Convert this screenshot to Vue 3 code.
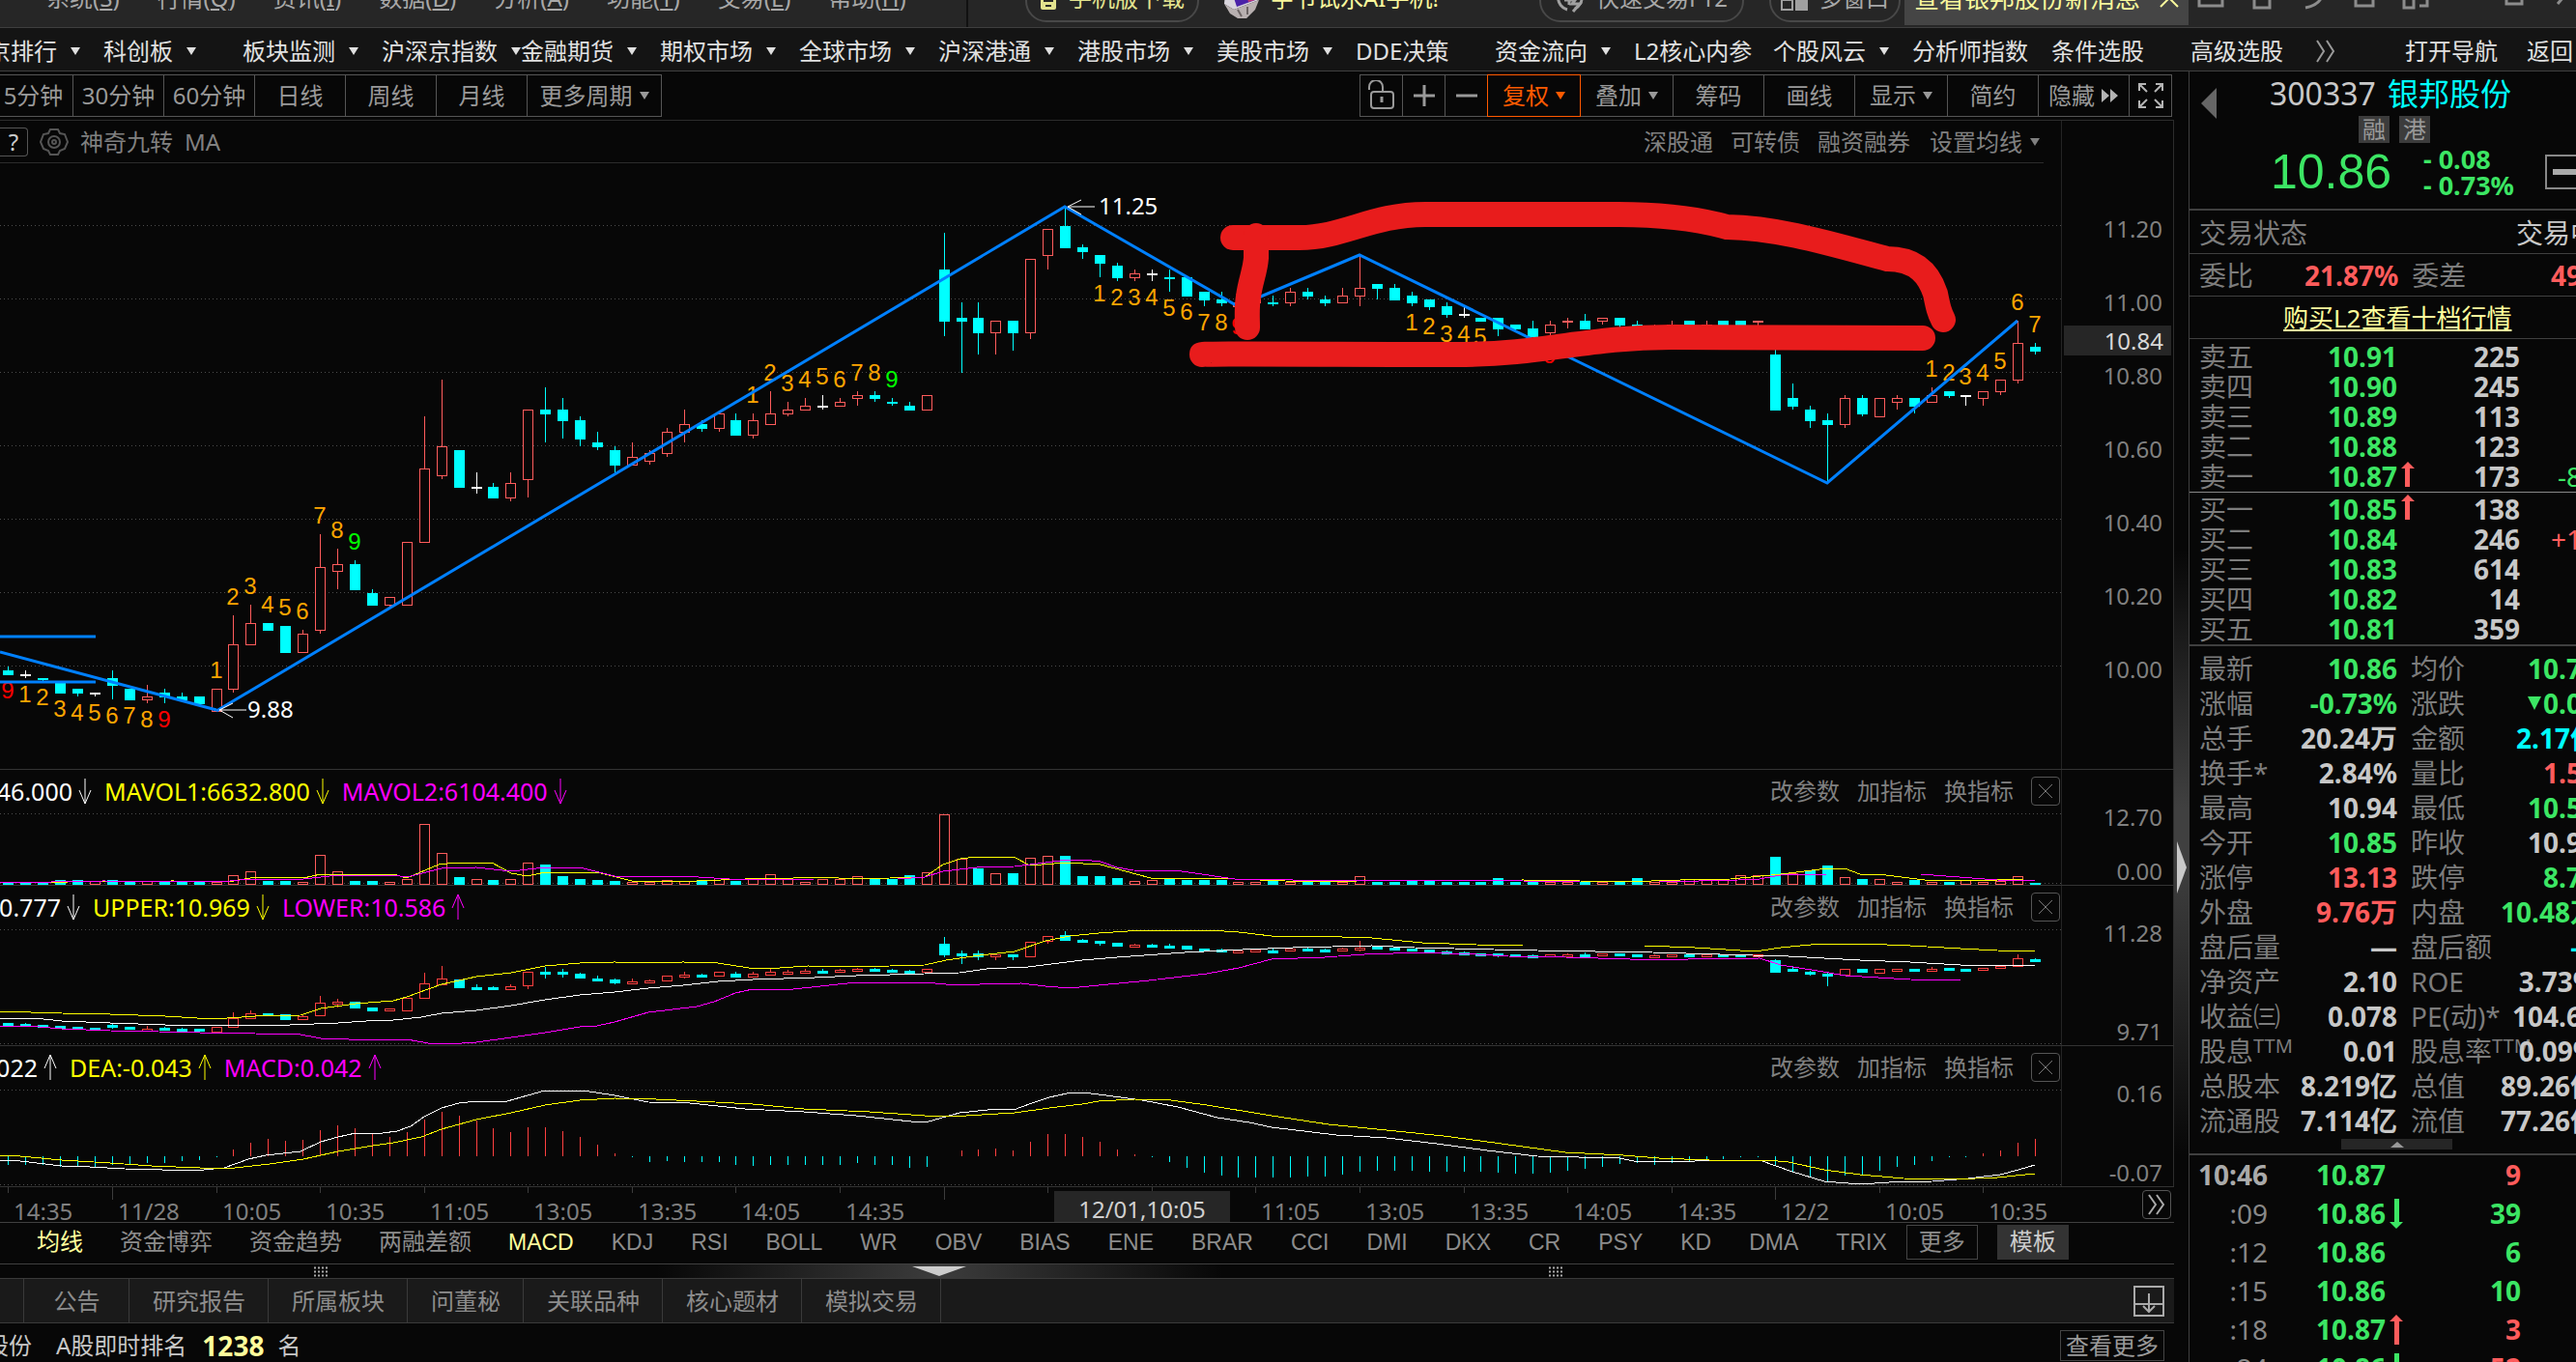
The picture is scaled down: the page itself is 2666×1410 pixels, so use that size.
<script setup>
const menus = [
  ['系统', 'S'], ['行情', 'Q'], ['资讯', 'I'], ['数据', 'D'],
  ['分析', 'A'], ['功能', 'T'], ['交易', 'E'], ['帮助', 'H'],
]
const winIcons = [
  'M2 0V22H26V0M8 8H20',
  'M6 0V24H22V0M1 6H27',
  'M4 0H16C28 4 26 20 6 24',
  'M5 0V22H23V0',
  'M2 10H12V24H2ZM2 0V4H26V22H18',
  'M2 14H26',
  'M2 4H18V20H2ZM8 0H24V16',
  'M2 -8L26 20M26 -8L2 20',
]
const navs = [
  ['深京排行', 1], ['科创板', 1], ['板块监测', 1], ['沪深京指数', 1], ['金融期货', 1], ['期权市场', 1],
  ['全球市场', 1], ['沪深港通', 1], ['港股市场', 1], ['美股市场', 1], ['DDE决策', 0], ['资金流向', 1],
  ['L2核心内参', 0], ['个股风云', 1], ['分析师指数', 0], ['条件选股', 0], ['高级选股', 0],
]
const periods = ['5分钟', '30分钟', '60分钟', '日线', '周线', '月线']
const priceTicks = ['11.20', '11.00', '10.80', '10.60', '10.40', '10.20', '10.00']

// high, body top, body bottom, low (in cents) and kind: c falling, r rising, w flat
const candles = `1000 999 998 998 c|999 998 998 997 w|997 997 997 996 c|996 996 993 993 c|994 994 993 992 c|993 993 993 992 w
999 997 995 991 c|994 994 991 991 c|995 992 991 990 r|994 993 992 990 c|993 992 991 991 c|992 992 990 990 c
994 994 988 988 r|1014 1006 994 993 r|1017 1012 1006 1006 r|1012 1012 1010 1010 c|1011 1011 1004 1004 c|1010 1009 1004 1004 r
1036 1027 1010 1009 r|1032 1028 1026 1021 r|1029 1028 1021 1021 c|1021 1020 1017 1017 c|1019 1019 1017 1016 r|1034 1034 1017 1017 r
1068 1054 1034 1034 r|1078 1060 1052 1051 r|1059 1059 1049 1049 c|1053 1049 1049 1047 w|1050 1049 1046 1046 c|1053 1050 1046 1045 r
1070 1070 1051 1046 r|1076 1070 1069 1061 c|1073 1070 1067 1062 c|1068 1067 1062 1060 c|1064 1061 1060 1059 c|1060 1059 1055 1053 c
1061 1057 1055 1055 r|1059 1058 1056 1055 r|1065 1064 1058 1057 r|1070 1066 1064 1061 r|1067 1066 1065 1064 c|1069 1069 1065 1064 r
1069 1067 1063 1063 c|1069 1067 1063 1062 r|1075 1069 1066 1066 r|1072 1070 1069 1068 r|1073 1071 1070 1070 r|1074 1071 1071 1070 w
1073 1072 1071 1071 r|1075 1074 1073 1071 r|1075 1074 1073 1072 c|1073 1072 1072 1071 c|1072 1071 1070 1070 c|1074 1074 1070 1070 r
1118 1108 1094 1090 c|1099 1095 1094 1080 c|1099 1095 1091 1085 c|1094 1094 1091 1085 r|1094 1094 1091 1086 c|1111 1111 1091 1089 r
1119 1119 1112 1108 r|1125 1120 1114 1114 c|1115 1114 1113 1111 c|1112 1112 1110 1106 c|1110 1109 1106 1105 c|1108 1107 1106 1105 r
1108 1107 1107 1105 w|1108 1106 1106 1102 c|1106 1106 1101 1101 c|1102 1102 1100 1098 c|1102 1100 1099 1098 c|1099 1099 1098 1097 r
1100 1100 1099 1098 r|1101 1099 1099 1098 c|1103 1102 1099 1098 r|1103 1102 1101 1100 c|1101 1100 1099 1098 c|1103 1101 1099 1099 r
1112 1103 1101 1098 r|1104 1104 1103 1100 c|1104 1103 1100 1100 c|1102 1101 1099 1098 c|1100 1100 1098 1097 c|1099 1098 1096 1095 c
1098 1096 1096 1095 w|1095 1095 1094 1094 c|1095 1095 1092 1090 c|1093 1093 1092 1091 c|1094 1092 1090 1090 c|1094 1093 1091 1089 r
1095 1094 1094 1092 r|1096 1094 1092 1092 c|1095 1095 1094 1093 r|1095 1095 1093 1092 c|1094 1093 1092 1091 c|1093 1092 1091 1091 r
1094 1093 1092 1092 r|1094 1094 1093 1093 c|1094 1093 1092 1092 r|1094 1094 1093 1093 c|1094 1094 1093 1092 c|1094 1094 1094 1092 r
1087 1085 1070 1070 c|1077 1073 1071 1070 c|1071 1070 1067 1065 c|1069 1067 1066 1050 c|1074 1073 1066 1065 r|1074 1073 1069 1068 c
1073 1073 1068 1068 r|1074 1073 1072 1070 r|1073 1073 1071 1069 c|1076 1074 1072 1072 r|1075 1075 1074 1073 c|1074 1074 1074 1071 w
1075 1075 1073 1071 r|1078 1078 1075 1074 r|1094 1088 1078 1077 r|1088 1087 1086 1085 c`
  .split(/[|\n]/)
  .map((s) => {
    const [h, t, b, l, k] = s.trim().split(' ')
    return { h: +h, t: +t, b: +b, l: +l, k }
  })

const STEP = 17.93
const xAt = (i) => Math.round(8.4 + STEP * i)
const mainY = (p) => Math.round(64.5 + (1120 - p) * 3.806)
const bollY = (p) => Math.round((1128 - p) * 0.754)

function shape(list, y, minBody) {
  return list.map((c, i) => {
    const top = y(c.t)
    const h = Math.max(y(c.b) - top, minBody)
    const hi = y(c.h)
    return { x: xAt(i), top, h, hi, lo: Math.max(y(c.l), top + h), k: c.k }
  })
}
const mainBars = shape(candles, mainY, 1)
const bollBars = shape(candles, bollY, 2).map((b) => ({ ...b, k: b.k === 'w' ? 'c' : b.k }))

// nine-turn counters: first bar, side, digits
const runs = [
  [0, 'b', '9'], [1, 'b', '123456789'], [12, 'a', '123456789'], [43, 'a', '123456789'],
  [63, 'b', '123456789'], [81, 'b', '123456789'], [111, 'a', '1234567'],
]
const counters = runs.flatMap(([start, side, digits]) =>
  [...digits].map((d, n) => {
    const c = candles[start + n]
    const below = side === 'b'
    return {
      d,
      x: xAt(start + n),
      y: below ? mainY(c.l) + 25 : mainY(c.h) - 11,
      cls: d === '9' ? (below ? 'nine-red' : 'nine-green') : 'count',
    }
  }),
)
const zigzag = [[12, 988], [61, 1125], [71, 1098], [78, 1112], [105, 1050], [116, 1094]]
  .map(([i, p]) => `${xAt(i)},${mainY(p)}`).join(' ')

const volumes = [
  1, 1, 1, 4, 4, 3, 4, 2, 3, 2, 2, 2, 2, 9, 13, 3, 3, 2, 30, 13, 3, 3, 2, 5, 62, 32, 7, 5, 4, 5, 22, 20, 8, 5, 4, 3, 2, 2, 4, 3,
  3, 6, 3, 6, 10, 5, 2, 5, 5, 8, 5, 5, 9, 12, 72, 26, 16, 11, 11, 27, 29, 29, 8, 8, 6, 3, 4, 5, 4, 4, 4, 2, 2, 3, 2, 2, 2, 2, 8, 2,
  2, 3, 3, 2, 2, 2, 6, 2, 3, 2, 2, 2, 2, 2, 6, 2, 2, 5, 4, 5, 9, 9, 28, 11, 14, 19, 7, 5, 5, 2, 4, 2, 2, 4, 2, 3, 8, 1,
]
const risingVolume = new Set([5, 27, 47, 54, 55, 65, 66, 97, 99, 100, 103, 113])
const volBars = volumes.map((v, i) => ({
  x: xAt(i), v, up: risingVolume.has(i) || candles[i].k === 'r',
}))
const macd = [
  -9, -9, -9, -11, -11, -11, -9, -9, -7, -7, -5, -4, -1, 7, 14, 18, 16, 17, 27, 32, 29, 24, 20, 25, 38, 46, 42, 37, 29, 25,
  30, 30, 26, 20, 12, 3, -1, -6, -5, -6, -6, -6, -9, -10, -9, -9, -9, -9, -9, -7, -9, -9, -12, -11, 0, 6, 7, 8, 6, 15,
  23, 23, 20, 15, 7, 2, -1, -6, -12, -17, -20, -22, -22, -22, -22, -21, -21, -19, -16, -15, -15, -15, -16, -16, -16, -16, -17, -18, -18, -17,
  -15, -13, -11, -8, -7, -9, -7, -6, -4, -3, -1, -1, -10, -16, -22, -27, -20, -20, -15, -11, -9, -5, -1, -1, 3, 6, 14, 18,
]
const lines = {
  vol1: '0,72 71,71 179,70 236,71 259,67 286,66 314,67 332,63 407,63 421,67 454,53 473,51 509,51 529,62 546,65 564,61 618,61 654,70 721,70 771,68 793,67 821,67 850,66 886,68 921,67 957,66 976,53 994,47 1011,45 1049,45 1066,54 1103,51 1139,53 1191,67 1223,67 1278,68 1330,70 1397,71 1412,69 1472,70 1539,70 1576,69 1635,70 1680,71 1739,69 1791,68 1843,63 1891,57 1909,57 1925,63 1944,63 1992,69 2067,69 2081,68 2106,70',
  vol2: '0,72 107,70 229,71 257,68 314,68 350,64 407,64 421,66 457,57 493,56 529,60 564,56 600,56 636,65 707,65 771,69 843,68 929,68 957,66 976,60 1011,56 1050,55 1082,51 1104,48 1120,48 1139,50 1156,56 1173,59 1223,60 1278,68 1323,68 1338,69 1442,69 1576,70 1635,71 1717,71 1799,69 1821,68 1843,64 1891,63 1988,63 2067,69 2106,70',
  upper: '0,85 64,87 114,88 171,90 221,93 250,91 264,90 311,89 332,82 368,77 407,74 421,70 457,57 493,49 529,45 554,40 564,38 600,35 636,34 671,35 707,34 743,35 775,40 807,40 836,38 886,39 921,38 957,37 979,32 1014,27 1050,23 1082,12 1107,7 1137,4 1182,1 1252,1 1282,3 1316,7 1357,7 1420,9 1472,14 1528,16 1576,17 1702,17 1754,19 1817,23 1843,19 1884,15 1929,15 1977,17 2029,20 2067,22 2106,23',
  mid: '0,92 36,92 64,95 114,97 171,99 221,99 300,99 350,97 379,95 407,94 436,91 457,87 493,84 529,79 564,73 600,68 636,65 671,61 707,58 743,54 779,52 843,50 886,48 957,46 993,45 1021,41 1064,39 1120,32 1156,29 1226,24 1286,21 1338,19 1420,17 1464,19 1546,21 1591,22 1710,24 1814,27 1851,28 1888,30 1925,32 1977,34 2029,37 2089,37 2106,38',
  lower: '0,100 29,100 64,103 114,105 164,106 207,107 243,107 264,108 311,109 332,113 361,114 421,114 443,118 464,119 493,117 529,112 564,107 600,101 618,100 636,96 671,86 721,80 739,75 761,66 779,62 821,62 886,55 957,55 979,57 1014,57 1057,56 1082,59 1107,61 1137,58 1189,53 1249,46 1282,40 1316,31 1371,29 1412,26 1472,24 1528,26 1561,28 1620,29 1687,31 1747,31 1821,30 1843,37 1881,43 1910,48 1977,52 2029,53 2106,53',
  dif: '0,73 21,74 64,79 93,80 129,82 168,83 211,83 232,81 257,72 275,68 311,64 332,54 350,49 368,45 396,45 411,43 425,38 439,28 457,19 475,14 493,12 525,12 546,6 564,1 604,1 636,6 671,13 714,14 771,20 832,23 886,27 943,33 961,33 979,28 993,24 1032,20 1049,21 1068,14 1086,8 1104,4 1120,3 1137,5 1182,11 1219,18 1260,29 1293,34 1316,39 1383,47 1435,50 1487,56 1539,63 1591,69 1676,71 1691,74 1754,74 1784,73 1821,73 1855,85 1888,95 1925,98 1955,96 2000,95 2037,92 2070,88 2089,83 2106,78',
  dea: '0,68 21,69 64,73 114,76 157,79 207,81 243,81 279,77 314,72 350,64 386,58 407,55 436,49 457,41 493,31 529,24 564,16 600,11 636,9 679,10 721,12 779,15 832,20 900,23 957,27 1000,27 1050,24 1086,19 1120,15 1137,12 1174,10 1212,11 1249,16 1316,27 1375,36 1435,42 1494,48 1554,56 1620,65 1680,68 1717,71 1769,73 1829,73 1851,75 1888,83 1925,88 1970,92 2022,93 2067,91 2106,87',
}
const panels = [
  { id: 'vol', h: 74, lead: 'w-vol', hi: '12.70', lo: '0.00', legend: [['46.000', 'd', 'white'], ['MAVOL1:6632.800', 'd', 'yellow'], ['MAVOL2:6104.400', 'd', 'magenta']] },
  { id: 'boll', h: 120, lead: 'w-boll', hi: '11.28', lo: '9.71', legend: [['10.777', 'd', 'white'], ['UPPER:10.969', 'd', 'yellow'], ['LOWER:10.586', 'u', 'magenta']] },
  { id: 'macd', h: 100, lead: 'w-macd', hi: '0.16', lo: '-0.07', legend: [['0.022', 'u', 'white'], ['DEA:-0.043', 'u', 'yellow'], ['MACD:0.042', 'u', 'magenta']] },
]
const times = [
  [0, '14:35'], [6, '11/28'], [12, '10:05'], [18, '10:35'], [24, '11:05'], [30, '13:05'], [36, '13:35'], [42, '14:05'], [48, '14:35'],
  [54, ''], [60, ''], [66, ''], [72, '11:05'], [78, '13:05'], [84, '13:35'], [90, '14:05'], [96, '14:35'], [102, '12/2'], [108, '10:05'], [114, '10:35'],
]
const studies = ['均线', '资金博弈', '资金趋势', '两融差额']
const indicators = ['MACD', 'KDJ', 'RSI', 'BOLL', 'WR', 'OBV', 'BIAS', 'ENE', 'BRAR', 'CCI', 'DMI', 'DKX', 'CR', 'PSY', 'KD', 'DMA', 'TRIX']
const bottomTabs = ['公告', '研究报告', '所属板块', '问董秘', '关联品种', '核心题材', '模拟交易']

const asks = [['卖五', '10.91', '', '225', ''], ['卖四', '10.90', '', '245', ''], ['卖三', '10.89', '', '113', ''], ['卖二', '10.88', '', '123', ''], ['卖一', '10.87', 'u', '173', '-80']]
const bids = [['买一', '10.85', 'u', '138', ''], ['买二', '10.84', '', '246', '+12'], ['买三', '10.83', '', '614', ''], ['买四', '10.82', '', '14', ''], ['买五', '10.81', '', '359', '']]
const stats = [
  ['最新', '10.86', 'g', '均价', '10.74', 'g'],
  ['涨幅', '-0.73%', 'g', '涨跌', '0.08', 'g', 'down'],
  ['总手', '20.24万', 'n', '金额', '2.17亿', 'cy'],
  ['换手*', '2.84%', 'n', '量比', '1.53', 'rd'],
  ['最高', '10.94', 'n', '最低', '10.50', 'g'],
  ['今开', '10.85', 'g', '昨收', '10.94', 'n'],
  ['涨停', '13.13', 'rd', '跌停', '8.75', 'g'],
  ['外盘', '9.76万', 'rd', '内盘', '10.48万', 'g'],
  ['盘后量', '—', 'n', '盘后额', '—', 'cy'],
  ['净资产', '2.10', 'n', 'ROE', '3.73%', 'n'],
  ['收益㈢', '0.078', 'n', 'PE(动)*', '104.60', 'n'],
  ['股息', '0.01', 'n', '股息率', '0.09%', 'n', 'ttm'],
  ['总股本', '8.219亿', 'n', '总值', '89.26亿', 'n'],
  ['流通股', '7.114亿', 'n', '流值', '77.26亿', 'n'],
]
const trades = [
  ['10:46', '10.87', '', '9', 'rd'], [':09', '10.86', 'd', '39', 'g'], [':12', '10.86', '', '6', 'g'],
  [':15', '10.86', '', '10', 'g'], [':18', '10.87', 'u', '3', 'rd'], [':24', '10.86', 'd', '52', 'rd'],
]
const kindClass = { c: 'fall', r: 'rise', w: 'flat' }
</script>

<template>
  <div class="app">
    <header class="menubar">
      <nav class="menus">
        <a v-for="m in menus" :key="m[1]" href="#">{{ m[0] }}(<u>{{ m[1] }}</u>)</a>
      </nav>
      <span class="divider"></span>
      <button class="pill phone">
        <svg width="18" height="30" viewBox="0 0 18 30"><rect x="1" y="1" width="16" height="26" rx="2" fill="#e2e28e" /><rect x="4" y="14" width="10" height="5" fill="#262626" /><rect x="6" y="22" width="6" height="2" fill="#262626" /></svg>
        手机版下载
      </button>
      <a class="promo" href="#">
        <svg width="40" height="44" viewBox="0 0 40 44"><path d="M4 6L34 2L38 24L12 34L2 28Z" fill="#d8d4dc" /><path d="M8 10L30 6L34 24L15 31Z" fill="#4a22a8" /><path d="M22 8L30 6L34 24L27 26Z" fill="#c03878" /><path d="M2 28L12 34L38 24L34 34L25 43H16L8 38Z" fill="#b8b0b0" /><path d="M16 34L20 41M26 31L26 39" stroke="#6c6464" stroke-width="2" /></svg>
        字节试水AI手机!
      </a>
      <button class="pill trade">
        <svg width="30" height="30" viewBox="0 0 30 30" fill="none" stroke="#a0a0a0" stroke-width="3"><path d="M12 2A13 13 0 0 0 12 27M18 2A13 13 0 0 1 20 26M9 10H18M9 17H18M14 8V22" /><path d="M24 12L17 21H25L18 29" /></svg>
        快速交易F12
      </button>
      <button class="pill multi">
        <svg width="28" height="28" viewBox="0 0 28 28"><path d="M1 1H12V12H1ZM1 16H12V26H1Z" fill="none" stroke="#a0a0a0" stroke-width="2" /><path d="M15 0H28V27H15Z" fill="#a0a0a0" /></svg>
        多窗口
      </button>
      <div class="notice"><a href="#">查看银邦股份新消息</a>
        <button aria-label="关闭消息"><svg width="20" height="20" viewBox="0 0 20 20" fill="none" stroke="#f8f89c" stroke-width="2"><path d="M1 1L19 19M19 1L1 19" /></svg></button>
      </div>
      <div class="wins">
        <button v-for="(d, i) in winIcons" :key="i" aria-label="窗口"><svg width="28" height="28" viewBox="0 0 28 28" fill="none" stroke="#8c8c8c" stroke-width="3"><path :d="d" /></svg></button>
      </div>
    </header>

    <nav class="navbar">
      <a v-for="n in navs" :key="n[0]" class="nav-item" href="#">{{ n[0] }}<i v-if="n[1]" class="caret"></i></a>
      <button class="more-nav" aria-label="更多"><svg width="20" height="24" viewBox="0 0 20 24" fill="none" stroke="#999" stroke-width="2"><path d="M1 1L8 12L1 23M11 1L18 12L11 23" /></svg></button>
      <a class="open-nav" href="#">打开导航</a>
      <a class="back-nav" href="#">返回</a>
    </nav>

    <div class="workspace">
      <main class="main">
        <div class="toolbar">
          <div class="group">
            <button v-for="p in periods" :key="p">{{ p }}</button>
            <button class="wide">更多周期<i class="caret"></i></button>
          </div>
          <div class="group">
            <button class="icon" aria-label="锁定"><svg width="30" height="32" viewBox="0 0 30 32" fill="none" stroke="#999" stroke-width="2"><path d="M2 10V7A6 6 0 0 1 16 7V12" /><rect x="4" y="12" width="23" height="17" rx="3" /><path d="M15 17V23" stroke-width="3" /></svg></button>
            <button class="icon" aria-label="放大"><svg width="24" height="24" viewBox="0 0 24 24" stroke="#999" stroke-width="3"><path d="M1 12H23M12 1V23" /></svg></button>
            <button class="icon" aria-label="缩小"><svg width="24" height="24" viewBox="0 0 24 24" stroke="#999" stroke-width="3"><path d="M1 12H23" /></svg></button>
            <button class="drop active">复权<i class="caret"></i></button>
            <button class="drop">叠加<i class="caret"></i></button>
            <button>筹码</button>
            <button>画线</button>
            <button class="drop">显示<i class="caret"></i></button>
            <button>简约</button>
            <button class="hide">隐藏<svg width="18" height="14" viewBox="0 0 18 14" fill="#b4b4b4"><path d="M0 0L8 7L0 14ZM9 0L17 7L9 14Z" /></svg></button>
            <button class="icon" aria-label="全屏"><svg width="28" height="28" viewBox="0 0 28 28" fill="none" stroke="#b4b4b4" stroke-width="2"><path d="M2 9V2H9M19 2H26V9M26 19V26H19M9 26H2V19M2 2L10 10M26 2L18 10M26 26L18 18M2 26L10 18" /></svg></button>
          </div>
        </div>

        <section class="row">
          <div class="plot">
            <div class="plot-head">
              <button class="help">?</button>
              <svg width="30" height="30" viewBox="0 0 30 30" fill="none" stroke="#555" stroke-width="2"><path d="M11 2H19L21 6L26 7L29 15L26 22L21 24L19 28H11L9 24L4 22L1 15L4 7L9 6Z" /><circle cx="15" cy="15" r="6" /><circle cx="15" cy="15" r="2" /></svg>
              <span>神奇九转</span><span>MA</span>
              <span class="spacer"></span>
              <a href="#">深股通</a><a href="#">可转债</a><a href="#">融资融券</a>
              <button class="avg">设置均线<i class="caret"></i></button>
            </div>
            <svg class="canvas" height="627">
              <line v-for="(t, i) in priceTicks" :key="t" class="dots" x1="0" x2="100%" :y1="64.5 + 76 * i" :y2="64.5 + 76 * i" />
              <g class="crisp">
                <g v-for="(b, i) in mainBars" :key="i" :class="kindClass[b.k]">
                  <path :d="`M${b.x} ${b.hi}V${b.top}M${b.x} ${b.top + b.h}V${b.lo}`" />
                  <rect :x="b.x - 5" :y="b.top" width="10" :height="b.h" />
                </g>
              </g>
              <text v-for="(n, i) in counters" :key="i" :class="n.cls" :x="n.x" :y="n.y">{{ n.d }}</text>
              <g class="trend">
                <path d="M0 490H99M0 537H99M0 506L224 566" />
                <polyline :points="zigzag" />
              </g>
              <g class="mark">
                <path d="M1133 45H1105M1119 38L1105 45L1119 53M255 566H227M241 559L227 566L241 574" />
                <text x="1137" y="53">11.25</text>
                <text x="256" y="574">9.88</text>
              </g>
              <g class="brush">
                <path d="M1276 77H1345C1390 77 1420 53 1475 53H1675C1720 53 1755 57 1787 66C1840 67 1890 82 1953 99C1985 99 1997 117 2003 135C2006 150 2007 154 2011 162" />
                <path d="M1300 75V98C1299 112 1294 122 1292 138C1290 150 1291 160 1291 170" />
                <path d="M1244 198C1244 197 1400 198 1508 198C1600 198 1640 180 1730 180L1990 181" />
              </g>
            </svg>
          </div>
          <div class="axis prices">
            <span v-for="t in priceTicks" :key="t">{{ t }}</span>
            <b class="now">10.84</b>
          </div>
        </section>

        <section v-for="p in panels" :key="p.id" class="row panel">
          <div class="plot">
            <div class="panel-head">
              <span v-for="(l, i) in p.legend" :key="l[0]" class="legend" :class="[l[2], i === 0 ? p.lead : '']">{{ l[0] }}<svg width="14" height="28" viewBox="0 0 14 28" fill="none" stroke="currentColor"><path :d="l[1] === 'd' ? 'M7 1V27M1 13L7 27L13 13' : 'M7 27V1M1 15L7 1L13 15'" /></svg></span>
              <span class="spacer"></span>
              <a href="#">改参数</a><a href="#">加指标</a><a href="#">换指标</a>
              <button class="close" aria-label="关闭"><svg width="14" height="14" viewBox="0 0 14 14" stroke="#777"><path d="M0 0L14 14M14 0L0 14" /></svg></button>
            </div>
            <svg class="canvas" :height="p.h">
              <line class="dots" x1="0" x2="100%" y1="0.5" y2="0.5" />
              <line class="dots" x1="0" x2="100%" :y1="p.h - 1.5" :y2="p.h - 1.5" />
              <template v-if="p.id === 'vol'">
                <g class="crisp">
                  <g v-for="(b, i) in volBars" :key="i" :class="b.up ? 'rise' : 'fall'"><rect :x="b.x - 5" :y="73 - b.v" width="10" :height="b.v" /></g>
                </g>
                <polyline class="line yellow" :points="lines.vol1" />
                <polyline class="line magenta" :points="lines.vol2" />
              </template>
              <template v-else-if="p.id === 'boll'">
                <g class="crisp small">
                  <g v-for="(b, i) in bollBars" :key="i" :class="kindClass[b.k]">
                    <path :d="`M${b.x} ${b.hi}V${b.top}M${b.x} ${b.top + b.h}V${b.lo}`" />
                    <rect :x="b.x - 5" :y="b.top" width="10" :height="b.h" />
                  </g>
                </g>
                <polyline class="line yellow" :points="lines.upper" />
                <polyline class="line white" :points="lines.mid" />
                <polyline class="line magenta" :points="lines.lower" />
              </template>
              <template v-else>
                <g class="crisp small">
                  <g v-for="(v, i) in macd" :key="i" :class="v > 0 ? 'rise' : 'fall'"><path :d="`M${xAt(i)} 69v${-v}`" /></g>
                </g>
                <polyline class="line white" :points="lines.dif" />
                <polyline class="line yellow" :points="lines.dea" />
              </template>
            </svg>
          </div>
          <div class="axis pair"><span>{{ p.hi }}</span><span>{{ p.lo }}</span></div>
        </section>

        <div class="timeline">
          <svg class="canvas" height="36">
            <g v-for="t in times" :key="t[0]">
              <path class="tick crisp" :d="`M${xAt(t[0])} 0V${t[1].includes('/') || t[0] === 54 ? 13 : 6}`" />
              <text :x="xAt(t[0]) + 6" y="34">{{ t[1] }}</text>
            </g>
            <rect x="1091" y="4" width="182" height="32" fill="#262626" />
            <text class="cursor" x="1182" y="32">12/01,10:05</text>
          </svg>
          <button class="close" aria-label="向后"><svg width="20" height="22" viewBox="0 0 20 22" fill="none" stroke="#aaa" stroke-width="2"><path d="M2 1L9 11L2 21M10 1L17 11L10 21" /></svg></button>
        </div>

        <nav class="indicators">
          <a v-for="t in studies" :key="t" class="study" :class="{ on: t === '均线' }" href="#">{{ t }}</a>
          <a v-for="t in indicators" :key="t" :class="{ on: t === 'MACD' }" href="#">{{ t }}</a>
          <button class="outlined">更多</button>
          <button class="filled">模板</button>
        </nav>

        <div class="hsplit">
          <svg width="18" height="11" class="grip"><path d="M1 1.5H17M1 5.5H17M1 9.5H17" stroke="#aaa" stroke-width="2" stroke-dasharray="2 2" /></svg>
          <span class="glow"><svg width="56" height="10" viewBox="0 0 56 10"><path d="M0 0H56L28 10Z" fill="#ccc" /></svg></span>
          <svg width="18" height="11" class="grip"><path d="M1 1.5H17M1 5.5H17M1 9.5H17" stroke="#aaa" stroke-width="2" stroke-dasharray="2 2" /></svg>
        </div>

        <nav class="tabs">
          <a v-for="t in bottomTabs" :key="t" href="#">{{ t }}</a>
          <span class="spacer"></span>
          <button aria-label="收起"><svg width="32" height="32" viewBox="0 0 32 32" fill="none" stroke="#aaa" stroke-width="2"><path d="M1 19V1H31V19M1 19H31M1 19V31H31V19M16 8V27M10 21L16 27L22 21" /></svg></button>
        </nav>

        <footer class="rank">
          <span class="stock">银邦股份</span>
          <span>A股即时排名</span>
          <b>1238</b>
          <span>名</span>
          <span class="spacer"></span>
          <button>查看更多</button>
        </footer>
      </main>

      <div class="vsplit"><svg width="10" height="54" viewBox="0 0 10 54"><path d="M0 0L10 27L0 54Z" fill="#c8c8c8" /></svg></div>

      <aside class="side">
        <div class="quote">
          <div class="title">
            <button class="prev" aria-label="上一只"><svg width="16" height="32" viewBox="0 0 16 32"><path d="M16 0V32L0 16Z" fill="#666" /></svg></button>
            <span class="code">300337</span><span class="name">银邦股份</span>
          </div>
          <div class="badges"><span>融</span><span>港</span></div>
          <div class="last">
            <span class="price">10.86</span>
            <span class="change"><b>- 0.08</b><b>- 0.73%</b></span>
            <button aria-label="减"><svg width="26" height="6"><rect width="26" height="6" fill="#aaa" /></svg></button>
          </div>
          <div class="pairrow thick"><span>交易状态</span><span class="status">交易中</span></div>
          <div class="pairrow"><span>委比</span><b class="rd">21.87%</b><span class="second">委差</span><b class="rd end">497</b></div>
          <div class="buy"><a href="#">购买L2查看十档行情</a></div>

          <table v-for="(side, s) in [asks, bids]" :key="s" class="book">
            <tbody>
              <tr v-for="r in side" :key="r[0]">
                <th scope="row">{{ r[0] }}</th>
                <td class="px g">{{ r[1] }}</td>
                <td class="arrow"><svg v-if="r[2]" width="14" height="26" viewBox="0 0 14 26" fill="#ff5c5c"><path d="M7 0L14 7H9V26H4V7H0Z" /></svg></td>
                <td class="vol">{{ r[3] }}</td>
                <td class="diff" :class="r[4][0] === '+' ? 'rd' : 'g'">{{ r[4] }}</td>
              </tr>
            </tbody>
          </table>

          <table class="stats">
            <tbody>
              <tr v-for="r in stats" :key="r[0]">
                <th scope="row">{{ r[0] }}<sup v-if="r[6] === 'ttm'">TTM</sup></th>
                <td :class="r[2]">{{ r[1] }}</td>
                <th scope="row" class="second">{{ r[3] }}<sup v-if="r[6] === 'ttm'">TTM</sup></th>
                <td :class="r[5]"><svg v-if="r[6] === 'down'" width="14" height="14" viewBox="0 0 14 14" fill="#3ce664"><path d="M0 0H14L7 14Z" /></svg>{{ r[4] }}</td>
              </tr>
            </tbody>
          </table>
          <div class="fold"><button aria-label="折叠"><svg width="14" height="6" viewBox="0 0 14 6"><path d="M0 6L7 0L14 6Z" fill="#999" /></svg></button></div>

          <table class="trades">
            <tbody>
              <tr v-for="(r, i) in trades" :key="i">
                <th scope="row" :class="{ full: i === 0 }">{{ r[0] }}</th>
                <td class="px g">{{ r[1] }}</td>
                <td class="arrow"><svg v-if="r[2]" width="14" height="31" viewBox="0 0 14 31" :fill="r[2] === 'u' ? '#ff5c5c' : '#3ce664'"><path :d="r[2] === 'u' ? 'M7 0L14 7H10V31H5V7H0Z' : 'M7 31L14 24H10V0H5V24H0Z'" /></svg></td>
                <td class="vol" :class="r[4]">{{ r[3] }}</td>
              </tr>
            </tbody>
          </table>
        </div>
      </aside>
    </div>
  </div>
</template>

<style>
body { margin: 0; background: #070707; overflow: hidden; }
</style>

<style scoped>
.app { height: 100vh; overflow: hidden; display: flex; flex-direction: column; background: #070707; color: #999; font: 24px/32px "Noto Sans", "Noto Sans CJK SC", sans-serif; }
.app * { box-sizing: border-box; }
a { color: inherit; text-decoration: none; white-space: nowrap; }
span, b { white-space: nowrap; }
button { font: inherit; color: inherit; background: none; border: 0; padding: 0; margin: 0; display: flex; align-items: center; justify-content: center; white-space: nowrap; flex: none; }
svg { flex: none; display: block; }
.spacer { flex: 1; }
.caret { flex: none; width: 0; height: 0; border: 5px solid transparent; border-top: 8px solid currentColor; border-bottom: 0; }

.menubar { flex: none; height: 29px; display: flex; align-items: center; background: #262626; border-bottom: 1px solid #3f3f3f; overflow: hidden; color: #a8a8a8; }
.menubar > * { flex: none; position: relative; top: -16px; }
.menus { display: flex; gap: 39px; width: 1000px; padding-left: 48px; }
.menubar .divider { width: 2px; height: 60px; background: #111; }
.pill { height: 50px; border: 2px solid #484848; border-radius: 22px; gap: 12px; }
.phone { width: 180px; margin-left: 59px; color: #e2e28e; }
.promo { display: flex; align-items: center; gap: 10px; margin-left: 24px; width: 328px; color: #f8f89c; }
.trade { width: 212px; }
.multi { width: 136px; margin-left: 26px; }
.notice { display: flex; align-items: center; justify-content: space-between; width: 294px; height: 56px; margin-left: 4px; padding: 0 10px; background: #454545; color: #f8f89c; font-size: 26px; }
.wins { display: flex; gap: 25px; margin-left: 9px; }

.navbar { flex: none; height: 45px; display: flex; align-items: center; padding-top: 3px; background: #141414; border-bottom: 1px solid #3f3f3f; color: #e0e0e0; overflow: hidden; }
.nav-item { flex: none; width: 144px; display: flex; align-items: center; gap: 14px; }
.nav-item:first-child { margin-left: -37px; }
.more-nav { width: 20px; margin-left: -14px; }
.open-nav { flex: none; width: 96px; margin-left: 72px; }
.back-nav { flex: none; width: 96px; margin-left: 30px; }

.workspace { flex: 1; min-height: 0; display: flex; }
.main { flex: 1; min-width: 0; }
.toolbar { height: 51px; display: flex; justify-content: space-between; align-items: center; padding: 0 3px 0 0; border-bottom: 1px solid #2c2c2c; }
.group { display: flex; height: 44px; }
.group button { width: 95px; margin-right: -1px; border: 1px solid #555; gap: 7px; }
.group button:first-child:not(.icon) { margin-left: -19px; padding-left: 12px; }
.group button.wide { width: 140px; }
.group button.icon { width: 45px; }
.group button.drop { width: 97px; }
.group button.active { color: #ff5a00; border-color: #ff5a00; position: relative; }

.row { display: flex; }
.plot { flex: 1; min-width: 0; overflow: hidden; }
.plot-head { height: 44px; margin-right: 18px; display: flex; align-items: center; gap: 12px; border-bottom: 1px solid #2c2c2c; color: #808080; }
.plot-head a { margin-left: 6px; }
.plot-head .help { width: 29px; height: 30px; border: 1px solid #555; border-left: 0; border-radius: 0 4px 4px 0; color: #ccc; }
.plot-head .avg { gap: 8px; margin: 0 4px 0 8px; }
.canvas { width: 100%; overflow: hidden; }
.crisp { shape-rendering: crispEdges; }
.dots { stroke: #4c4c4c; stroke-dasharray: 1 3; shape-rendering: crispEdges; }
.fall path { stroke: #00ffff; }
.fall rect { fill: #00ffff; stroke: #00ffff; }
.rise path { stroke: #ff5c5c; }
.rise rect { fill: #070707; stroke: #ff5c5c; }
.flat path, .flat rect { stroke: #fff; fill: #fff; }
.small .rise path, .small .rise rect { stroke: #ff4040; }
.count, .nine-red, .nine-green { font: 24px "Liberation Sans", sans-serif; text-anchor: middle; fill: #ffa500; }
.nine-red { fill: #ff0000; }
.nine-green { fill: #00ff00; }
.trend { fill: none; stroke: #0080ff; stroke-width: 3; }
.mark path { fill: none; stroke: #fff; }
.mark text { fill: #fff; }
.brush { fill: none; stroke: #e81c1c; stroke-width: 26; stroke-linecap: round; }

.axis { flex: none; width: 117px; padding-right: 11px; border-left: 1px solid #242424; border-right: 1px solid #2c2c2c; text-align: right; color: #808080; position: relative; }
.prices { padding-top: 74px; }
.prices span { display: block; line-height: 76px; }
.prices .now { position: absolute; top: 212px; left: 2px; right: 2px; padding-right: 8px; background: #262626; color: #d8d8d8; font-weight: 400; line-height: 31px; }
.pair { display: flex; flex-direction: column; justify-content: space-between; padding-top: 37px; padding-bottom: 2px; line-height: 24px; }
.panel { border-top: 1px solid #333; }
.panel-head { height: 45px; display: flex; align-items: center; padding: 0 1px 1px 0; color: #808080; }
.panel-head a { margin-right: 18px; }
.legend { display: flex; align-items: center; gap: 6px; margin-right: 13px; font-size: 25px; }
.w-vol, .w-boll, .w-macd { justify-content: flex-end; overflow: hidden; }
.w-vol { width: 95px; }
.w-boll { width: 83px; }
.w-macd { width: 59px; }
.close { width: 30px; height: 30px; border: 1px solid #555; border-radius: 4px; }
.white { color: #fff; }
.yellow { color: #ffff00; }
.magenta { color: #ff00ff; }
.line { fill: none; stroke: currentColor; shape-rendering: crispEdges; }

.timeline { height: 37px; display: flex; align-items: center; border-top: 1px solid #333; padding-right: 3px; }
.timeline .canvas { flex: 1; min-width: 0; }
.timeline text { fill: #808080; }
.timeline .cursor { fill: #d0d0d0; text-anchor: middle; }
.tick { stroke: #3c3c3c; }
.indicators { height: 43px; display: flex; align-items: center; gap: 39px; padding: 0 0 2px 38px; border-top: 1px solid #3f3f3f; color: #8c8c8c; font-family: "Liberation Sans", "Noto Sans CJK SC", sans-serif; font-size: 23px; overflow: hidden; }
.indicators .study { font-size: 24px; margin-right: -1px; }
.indicators .on { color: #ffff9c; }
.indicators button { width: 74px; height: 36px; margin-left: -19px; font-size: 24px; }
.outlined { border: 1px solid #444; }
.filled { background: #333; color: #ccc; }
.hsplit { height: 15px; display: flex; align-items: center; border-top: 1px solid #3f3f3f; padding-left: 324px; }
.glow { width: 586px; height: 14px; margin: 0 337px; display: flex; justify-content: center; padding-top: 2px; background: linear-gradient(90deg, transparent, #3c3c3c 50%, transparent); }
.tabs { height: 47px; display: flex; align-items: center; padding: 0 10px 0 24px; background: #1a1a1a; border: solid #3a3a3a; border-width: 1px 0; color: #8c8c8c; }
.tabs a { line-height: 45px; min-width: 110px; padding: 0 23px 0 24px; text-align: center; border-right: 1px solid #3a3a3a; }
.tabs a:first-child { border-left: 1px solid #3a3a3a; }
.rank { height: 41px; display: flex; align-items: center; padding: 5px 10px 0 0; color: #c8c8c8; }
.rank .stock { margin: 0 25px 0 -63px; }
.rank b { margin: 0 14px 0 16px; font-size: 28px; color: #ffff9c; }
.rank button { width: 108px; height: 32px; border: 1px solid #444; color: #999; }

.vsplit { flex: none; width: 15px; display: flex; align-items: center; padding: 311px 0 0 3px; background: linear-gradient(transparent 37%, #404040 57%, #404040 61%, transparent 84%); }
.side { flex: 0 0 401px; overflow: hidden; border-left: 1px solid #3f3f3f; font-size: 28px; }
.quote { width: 432px; }
.g { color: #3ce664; }
.rd { color: #ff5c5c; }
.cy { color: #00ffff; }
.n { color: #c8c8c8; }
.title { display: flex; align-items: center; height: 46px; padding-left: 12px; font-size: 32px; color: #c8c8c8; }
.title .prev { margin: 20px 55px 0 0; }
.code { width: 122px; }
.name { color: #00ffff; }
.badges { display: flex; gap: 10px; padding-left: 175px; height: 28px; font-size: 24px; line-height: 28px; }
.badges span { width: 32px; text-align: center; background: #3c3c3c; }
.last { display: flex; align-items: center; height: 68px; padding: 0 0 8px 84px; color: #3ce664; }
.price { width: 158px; font: 50px/60px "Liberation Sans", sans-serif; }
.change { width: 126px; font-size: 27px; line-height: 27px; }
.change b { display: block; }
.last button { width: 60px; height: 36px; border: 2px solid #888; justify-content: flex-start; padding-left: 6px; }
.pairrow { display: flex; align-items: center; height: 44px; padding: 1px 10px 0; border-top: 1px solid #3f3f3f; color: #7c7c7c; }
.pairrow.thick { height: 46px; border-top-width: 2px; }
.pairrow .status { margin-left: auto; color: #c8c8c8; }
.pairrow b.rd:not(.end) { margin-left: 53px; }
.pairrow .second { margin-left: 14px; }
.pairrow .end { margin-left: auto; }
.buy { height: 45px; border: solid #3f3f3f; border-width: 1px 0; padding-left: 97px; font-size: 26px; line-height: 45px; }
.buy a { color: #ffff9c; text-decoration: underline; }
table { table-layout: fixed; border-collapse: collapse; width: 432px; }
th, td { padding: 0; height: 31px; line-height: 30px; font-weight: 700; white-space: nowrap; }
th { font-weight: 400; text-align: left; color: #7c7c7c; }
.book { display: block; padding-top: 3px; overflow: hidden; }
.book + .book { padding-top: 2px; border-top: 1px solid #888; }
.book th { width: 105px; padding-left: 10px; }
.px { width: 110px; text-align: right; }
.arrow { width: 27px; padding-left: 4px; }
.vol { width: 100px; text-align: right; color: #c8c8c8; }
.vol.rd { color: #ff5c5c; }
.vol.g { color: #3ce664; }
.diff { width: 80px; text-align: right; font-weight: 400; }
.stats { display: block; padding-top: 5px; border-top: 2px solid #3f3f3f; }
.stats tr, .book tr, .trades tr { display: flex; align-items: center; }
.stats th, .stats td { height: 36px; line-height: 36px; }
.stats th { width: 115px; padding-left: 10px; }
.stats td { width: 100px; display: flex; align-items: center; justify-content: flex-end; gap: 2px; }
.stats th.second { padding-left: 14px; }
.stats .second + td { width: 92px; }
sup { font-size: 20px; line-height: 1; vertical-align: 9px; }
.fold { height: 16px; padding: 1px 0 0 157px; }
.fold button { width: 115px; height: 11px; background: #262626; }
.trades { display: block; border-top: 2px solid #3f3f3f; }
.trades th, .trades td { height: 40px; line-height: 40px; }
.trades th { width: 81px; text-align: right; color: #888; }
.trades th.full { font-weight: 700; color: #aaa; }
.trades .px { width: 122px; }
.trades .arrow { display: flex; align-items: center; }
.trades .vol { width: 113px; }
</style>
